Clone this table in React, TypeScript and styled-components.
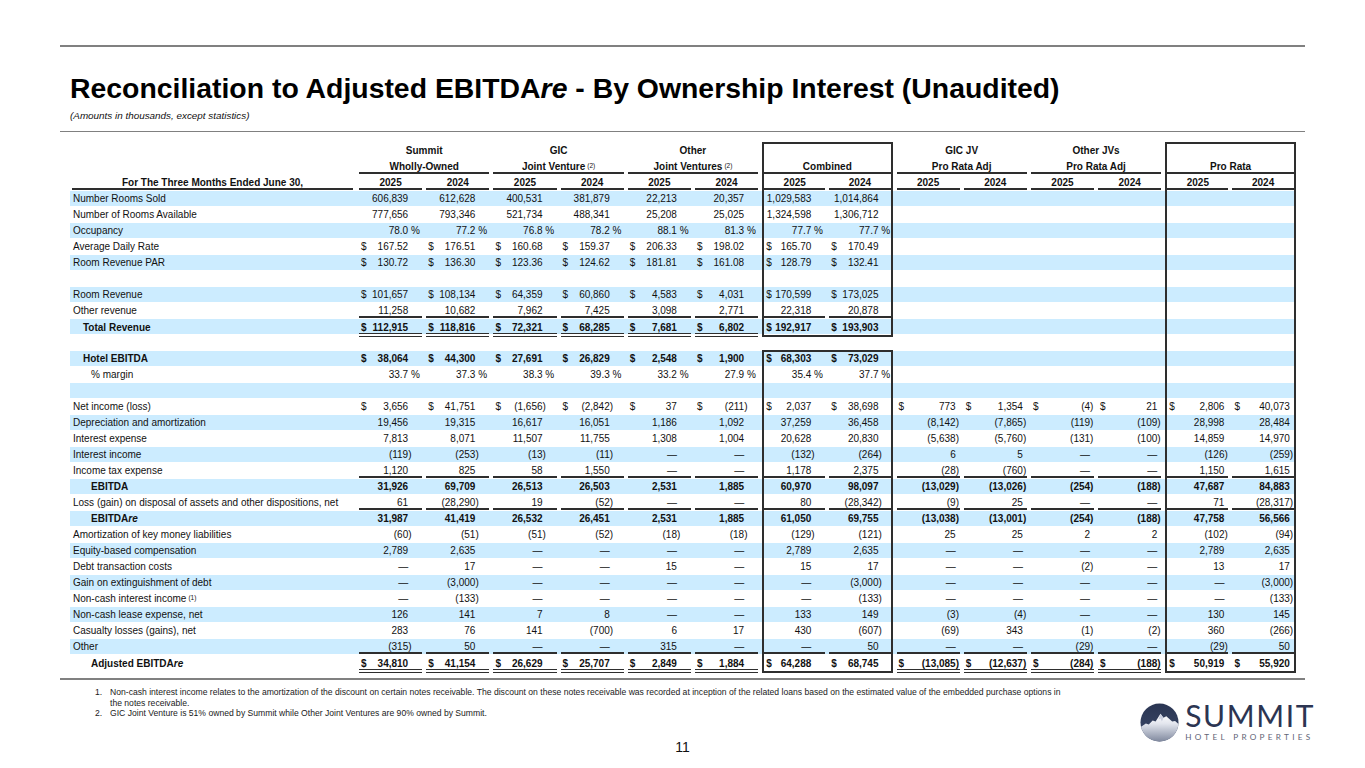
import React from 'react';
import styled, { createGlobalStyle, css } from 'styled-components';

const LINE = '#2e2e2e';
const BLUE = '#ccecff';

const Global = createGlobalStyle`
  html, body { margin: 0; padding: 0; background: #fff; }
  body { font-family: "Liberation Sans", Arial, sans-serif; color: #000; }
`;

const Page = styled.div`
  width: 1365px;
  height: 768px;
  overflow: hidden;
  box-sizing: border-box;
  padding-top: 45px;
  display: flex;
  flex-direction: column;
`;

const Rule = styled.div<{ $h: number; $mt?: number }>`
  flex: none;
  margin: ${p => p.$mt ?? 0}px 60px 0;
  height: ${p => p.$h}px;
  background: #808080;
`;

const Title = styled.h1`
  margin: 25px 0 0 70px;
  font-size: 28.4px;
  line-height: 32px;
  font-weight: 700;
  color: #000;
`;

const Subtitle = styled.div`
  margin: 6px 0 0 70px;
  font-size: 9.9px;
  line-height: 12px;
  font-style: italic;
  color: #111;
`;

const Table = styled.div`
  margin: 10px 0 0 70px;
  width: 1226px;
  font-size: 10px;
  color: #111;
`;

const Row = styled.div<{ $stripe?: boolean; $bold?: boolean }>`
  display: grid;
  grid-template-columns: 287px repeat(13, 67.2px) 65.4px;
  height: 16px;
  font-weight: ${p => (p.$bold ? 700 : 400)};
  background: ${p =>
    p.$stripe ? `linear-gradient(${BLUE}, ${BLUE}) 0 1px / 100% 15px no-repeat` : 'none'};
`;

const Cell = styled.div<{
  $span?: number;
  $bl?: boolean;
  $br?: boolean;
  $bt?: boolean;
  $bb?: boolean;
  $edge?: boolean;
}>`
  grid-column: span ${p => p.$span ?? 1};
  display: flex;
  align-items: stretch;
  min-width: 0;
  box-sizing: border-box;
  padding: 0 2px;
  ${p => p.$bl && css`margin-left: 2px; padding-left: 0; border-left: 2px solid ${LINE};`}
  ${p =>
    p.$br &&
    css`margin-right: ${p.$edge ? 0 : 2}px; padding-right: 0; border-right: 2px solid ${LINE};`}
  ${p => p.$bt && css`border-top: 2px solid ${LINE}; padding-bottom: 2px;`}
  ${p => p.$bb && css`border-bottom: 2px solid ${LINE}; padding-top: 2px;`}
`;

const Head = styled.div<{ $under?: boolean }>`
  flex: 1;
  display: flex;
  align-items: center;
  justify-content: center;
  white-space: nowrap;
  font-weight: 700;
  ${p => p.$under && css`border-bottom: 2px solid ${LINE}; padding-top: 2px;`}
`;

const HeadLabel = styled(Head)`
  margin-right: 2px;
`;

const Sup = styled.sup`
  font-size: 6.5px;
  font-weight: 400;
  vertical-align: 4px;
  line-height: 0;
  margin-left: 2px;
`;

const Label = styled.div<{ $indent: number }>`
  display: flex;
  align-items: center;
  padding-left: ${p => p.$indent}px;
  white-space: nowrap;
`;

const Val = styled.div<{ $rule?: 'single' | 'double' }>`
  flex: 1;
  display: flex;
  align-items: center;
  min-width: 0;
  white-space: pre;
  ${p => p.$rule === 'single' && css`border-bottom: 2px solid ${LINE}; padding-top: 2px;`}
  ${p => p.$rule === 'double' && css`border-bottom: 4px double ${LINE}; padding-top: 4px;`}
`;

const Dollar = styled.span`
  padding-left: 2px;
`;

const Num = styled.span`
  margin-left: auto;
`;

const Suffix = styled.span<{ $w: number }>`
  flex: none;
  width: ${p => p.$w}px;
`;

const Footer = styled.div`
  display: grid;
  grid-template-columns: 1fr auto 1fr;
  grid-template-rows: auto auto;
`;

const Notes = styled.div`
  grid-column: 1 / 4;
  grid-row: 1;
  padding: 7px 0 0 95px;
  font-size: 8.6px;
  line-height: 10.5px;
  color: #1a1a1a;
`;

const Note = styled.div`
  display: flex;
`;

const NoteNum = styled.span`
  flex: none;
  width: 15px;
`;

const PageNum = styled.div`
  grid-column: 2;
  grid-row: 2;
  margin-top: 20px;
  font-size: 14px;
  line-height: 16px;
  color: #111;
`;

const Logo = styled.div`
  grid-column: 3;
  grid-row: 1 / 3;
  justify-self: end;
  align-self: start;
  margin: 23px 50px 0 0;
  display: flex;
  align-items: center;
  gap: 6px;
`;

const LogoText = styled.div`
  display: flex;
  flex-direction: column;
`;

const LogoName = styled.div`
  font-family: Lato, "Open Sans", sans-serif;
  font-weight: 400;
  font-size: 30px;
  line-height: 24px;
  letter-spacing: 1.6px;
  color: #2c3552;
`;

const LogoSub = styled.div`
  font-family: Lato, "Open Sans", sans-serif;
  font-size: 8.2px;
  line-height: 9px;
  letter-spacing: 3.3px;
  color: #5f6576;
  margin-top: 6px;
`;

type RowDef = {
  label: React.ReactNode;
  indent: number;
  bold?: boolean;
  v?: string[];
  rule?: 'single' | 'double';
};

const E = (
  <>
    EBITDA<i>re</i>
  </>
);

const rows: RowDef[] = [
  { label: 'Number Rooms Sold', indent: 3, v: ['606,839', '612,628', '400,531', '381,879', '22,213', '20,357', '1,029,583', '1,014,864'] },
  { label: 'Number of Rooms Available', indent: 3, v: ['777,656', '793,346', '521,734', '488,341', '25,208', '25,025', '1,324,598', '1,306,712'] },
  { label: 'Occupancy', indent: 3, v: ['78.0%', '77.2%', '76.8%', '78.2%', '88.1%', '81.3%', '77.7%', '77.7%'] },
  { label: 'Average Daily Rate', indent: 3, v: ['$167.52', '$176.51', '$160.68', '$159.37', '$206.33', '$198.02', '$165.70', '$170.49'] },
  { label: 'Room Revenue PAR', indent: 3, v: ['$130.72', '$136.30', '$123.36', '$124.62', '$181.81', '$161.08', '$128.79', '$132.41'] },
  { label: '', indent: 3 },
  { label: 'Room Revenue', indent: 3, v: ['$101,657', '$108,134', '$64,359', '$60,860', '$4,583', '$4,031', '$170,599', '$173,025'] },
  { label: 'Other revenue', indent: 3, rule: 'single', v: ['11,258', '10,682', '7,962', '7,425', '3,098', '2,771', '22,318', '20,878'] },
  { label: 'Total Revenue', indent: 13, bold: true, rule: 'double', v: ['$112,915', '$118,816', '$72,321', '$68,285', '$7,681', '$6,802', '$192,917', '$193,903'] },
  { label: '', indent: 3 },
  { label: 'Hotel EBITDA', indent: 13, bold: true, v: ['$38,064', '$44,300', '$27,691', '$26,829', '$2,548', '$1,900', '$68,303', '$73,029'] },
  { label: '% margin', indent: 21, v: ['33.7%', '37.3%', '38.3%', '39.3%', '33.2%', '27.9%', '35.4%', '37.7%'] },
  { label: '', indent: 3 },
  { label: 'Net income (loss)', indent: 3, v: ['$3,656', '$41,751', '$(1,656)', '$(2,842)', '$37', '$(211)', '$2,037', '$38,698', '$773', '$1,354', '$(4)', '$21', '$2,806', '$40,073'] },
  { label: 'Depreciation and amortization', indent: 3, v: ['19,456', '19,315', '16,617', '16,051', '1,186', '1,092', '37,259', '36,458', '(8,142)', '(7,865)', '(119)', '(109)', '28,998', '28,484'] },
  { label: 'Interest expense', indent: 3, v: ['7,813', '8,071', '11,507', '11,755', '1,308', '1,004', '20,628', '20,830', '(5,638)', '(5,760)', '(131)', '(100)', '14,859', '14,970'] },
  { label: 'Interest income', indent: 3, v: ['(119)', '(253)', '(13)', '(11)', '—', '—', '(132)', '(264)', '6', '5', '—', '—', '(126)', '(259)'] },
  { label: 'Income tax expense', indent: 3, rule: 'single', v: ['1,120', '825', '58', '1,550', '—', '—', '1,178', '2,375', '(28)', '(760)', '—', '—', '1,150', '1,615'] },
  { label: 'EBITDA', indent: 21, bold: true, v: ['31,926', '69,709', '26,513', '26,503', '2,531', '1,885', '60,970', '98,097', '(13,029)', '(13,026)', '(254)', '(188)', '47,687', '84,883'] },
  { label: 'Loss (gain) on disposal of assets and other dispositions, net', indent: 3, rule: 'single', v: ['61', '(28,290)', '19', '(52)', '—', '—', '80', '(28,342)', '(9)', '25', '—', '—', '71', '(28,317)'] },
  { label: E, indent: 21, bold: true, v: ['31,987', '41,419', '26,532', '26,451', '2,531', '1,885', '61,050', '69,755', '(13,038)', '(13,001)', '(254)', '(188)', '47,758', '56,566'] },
  { label: 'Amortization of key money liabilities', indent: 3, v: ['(60)', '(51)', '(51)', '(52)', '(18)', '(18)', '(129)', '(121)', '25', '25', '2', '2', '(102)', '(94)'] },
  { label: 'Equity-based compensation', indent: 3, v: ['2,789', '2,635', '—', '—', '—', '—', '2,789', '2,635', '—', '—', '—', '—', '2,789', '2,635'] },
  { label: 'Debt transaction costs', indent: 3, v: ['—', '17', '—', '—', '15', '—', '15', '17', '—', '—', '(2)', '—', '13', '17'] },
  { label: 'Gain on extinguishment of debt', indent: 3, v: ['—', '(3,000)', '—', '—', '—', '—', '—', '(3,000)', '—', '—', '—', '—', '—', '(3,000)'] },
  {
    label: (
      <>
        Non-cash interest income<Sup>(1)</Sup>
      </>
    ),
    indent: 3,
    v: ['—', '(133)', '—', '—', '—', '—', '—', '(133)', '—', '—', '—', '—', '—', '(133)'],
  },
  { label: 'Non-cash lease expense, net', indent: 3, v: ['126', '141', '7', '8', '—', '—', '133', '149', '(3)', '(4)', '—', '—', '130', '145'] },
  { label: 'Casualty losses (gains), net', indent: 3, v: ['283', '76', '141', '(700)', '6', '17', '430', '(607)', '(69)', '343', '(1)', '(2)', '360', '(266)'] },
  { label: 'Other', indent: 3, rule: 'single', v: ['(315)', '50', '—', '—', '315', '—', '—', '50', '—', '—', '(29)', '—', '(29)', '50'] },
  {
    label: <>Adjusted {E}</>,
    indent: 21,
    bold: true,
    rule: 'double',
    v: ['$34,810', '$41,154', '$26,629', '$25,707', '$2,849', '$1,884', '$64,288', '$68,745', '$(13,085)', '$(12,637)', '$(284)', '$(188)', '$50,919', '$55,920'],
  },
];

const LAST = rows.length - 1;

function parse(raw: string) {
  let s = raw;
  const dollar = s.startsWith('$');
  if (dollar) s = s.slice(1);
  let suffix = '';
  if (s.endsWith(')')) {
    s = s.slice(0, -1);
    suffix = ')';
  } else if (s.endsWith('%')) {
    s = s.slice(0, -1);
    suffix = ' %';
  }
  return { dollar, num: s, suffix };
}

function DataCell({ raw, col, r, rule }: { raw: string; col: number; r: number; rule?: 'single' | 'double' }) {
  const inCombined = col === 6 || col === 7;
  const inProRata = col === 12 || col === 13;
  const combinedOn = r !== 9;
  const boxed = (inCombined && combinedOn) || inProRata;
  const boxBottom = boxed && (r === LAST || (inCombined && r === 8));
  const boxTop = inCombined && r === 10;
  const left = boxed && (col === 6 || col === 12);
  const right = boxed && (col === 7 || col === 13);

  let cellRule: 'single' | 'double' | undefined = undefined;
  if (raw !== '' && rule) {
    if (rule === 'single') cellRule = 'single';
    else if (!boxBottom) cellRule = 'double';
  }
  const p = parse(raw);
  const w = col >= 8 ? 4 : col === 7 ? 12 : 14;
  return (
    <Cell $bl={left} $br={right} $edge={col === 13} $bb={boxBottom} $bt={boxTop}>
      <Val $rule={cellRule}>
        {raw !== '' && (
          <>
            {p.dollar && <Dollar>$</Dollar>}
            <Num>{p.num}</Num>
            <Suffix $w={w}>{p.suffix}</Suffix>
          </>
        )}
      </Val>
    </Cell>
  );
}

const groups1 = ['Summit', 'GIC', 'Other'];
const groups1b = ['GIC JV', 'Other JVs'];

function TableHead() {
  const years = Array.from({ length: 14 }, (_, i) => (i % 2 === 0 ? '2025' : '2024'));
  return (
    <>
      <Row>
        <Cell />
        {groups1.map(g => (
          <Cell key={g} $span={2}>
            <Head>{g}</Head>
          </Cell>
        ))}
        <Cell $span={2} $bl $br $bt />
        {groups1b.map(g => (
          <Cell key={g} $span={2}>
            <Head>{g}</Head>
          </Cell>
        ))}
        <Cell $span={2} $bl $br $bt $edge />
      </Row>
      <Row>
        <Cell />
        <Cell $span={2}>
          <Head $under>Wholly-Owned</Head>
        </Cell>
        <Cell $span={2}>
          <Head $under>
            Joint Venture<Sup>(2)</Sup>
          </Head>
        </Cell>
        <Cell $span={2}>
          <Head $under>
            Joint Ventures<Sup>(2)</Sup>
          </Head>
        </Cell>
        <Cell $span={2} $bl $br $bb>
          <Head>Combined</Head>
        </Cell>
        <Cell $span={2}>
          <Head $under>Pro Rata Adj</Head>
        </Cell>
        <Cell $span={2}>
          <Head $under>Pro Rata Adj</Head>
        </Cell>
        <Cell $span={2} $bl $br $bb $edge>
          <Head>Pro Rata</Head>
        </Cell>
      </Row>
      <Row>
        <Cell>
          <HeadLabel $under>For The Three Months Ended June 30,</HeadLabel>
        </Cell>
        {years.map((y, i) => (
          <Cell key={i} $bl={i === 6 || i === 12} $br={i === 7 || i === 13} $edge={i === 13}>
            <Head $under>{y}</Head>
          </Cell>
        ))}
      </Row>
    </>
  );
}

function Mark() {
  return (
    <svg width="39" height="39" viewBox="0 0 40 40">
      <defs>
        <clipPath id="lc">
          <circle cx="20" cy="20" r="19.5" />
        </clipPath>
        <linearGradient id="sky" x1="0" y1="0" x2="0" y2="1">
          <stop offset="0" stopColor="#2a3552" />
          <stop offset="1" stopColor="#3d4a6a" />
        </linearGradient>
        <linearGradient id="mt" x1="0" y1="0" x2="0" y2="1">
          <stop offset="0" stopColor="#ffffff" />
          <stop offset="0.35" stopColor="#e3e6ee" />
          <stop offset="1" stopColor="#7d869c" />
        </linearGradient>
      </defs>
      <g clipPath="url(#lc)">
        <rect width="40" height="40" fill="url(#sky)" />
        <path
          d="M0 25 L6 21 L9 22 L13 18 L16 19 L21 11 L24 15 L27 13.5 L33 19 L36 18.5 L40 22 L40 40 L0 40 Z"
          fill="url(#mt)"
        />
        <path d="M21 11 L19 17 L21 16 L22.5 19 L24 15 Z" fill="#c9cede" />
      </g>
    </svg>
  );
}

export default function App() {
  return (
    <Page>
      <Global />
      <Rule $h={2} />
      <Title>
        Reconciliation to Adjusted EBITDA<i>re</i> - By Ownership Interest (Unaudited)
      </Title>
      <Subtitle>(Amounts in thousands, except statistics)</Subtitle>
      <Rule $h={1} $mt={9} />
      <Table>
        <TableHead />
        {rows.map((row, r) => {
          const vals = Array.from({ length: 14 }, (_, i) => (row.v ? row.v[i] ?? '' : ''));
          return (
            <Row key={r} $stripe={r % 2 === 0} $bold={row.bold}>
              <Label $indent={row.indent}>{row.label}</Label>
              {vals.map((raw, c) => (
                <DataCell key={c} raw={raw} col={c} r={r} rule={row.rule} />
              ))}
            </Row>
          );
        })}
      </Table>
      <Rule $h={2} $mt={8} />
      <Footer>
        <Notes>
          <Note>
            <NoteNum>1.</NoteNum>
            <span>
              Non-cash interest income relates to the amortization of the discount on certain notes receivable. The
              discount on these notes receivable was recorded at inception of the related loans based on the estimated
              value of the embedded purchase options in
              <br />
              the notes receivable.
            </span>
          </Note>
          <Note>
            <NoteNum>2.</NoteNum>
            <span>GIC Joint Venture is 51% owned by Summit while Other Joint Ventures are 90% owned by Summit.</span>
          </Note>
        </Notes>
        <PageNum>11</PageNum>
        <Logo>
          <Mark />
          <LogoText>
            <LogoName>SUMMIT</LogoName>
            <LogoSub>HOTEL PROPERTIES</LogoSub>
          </LogoText>
        </Logo>
      </Footer>
    </Page>
  );
}
